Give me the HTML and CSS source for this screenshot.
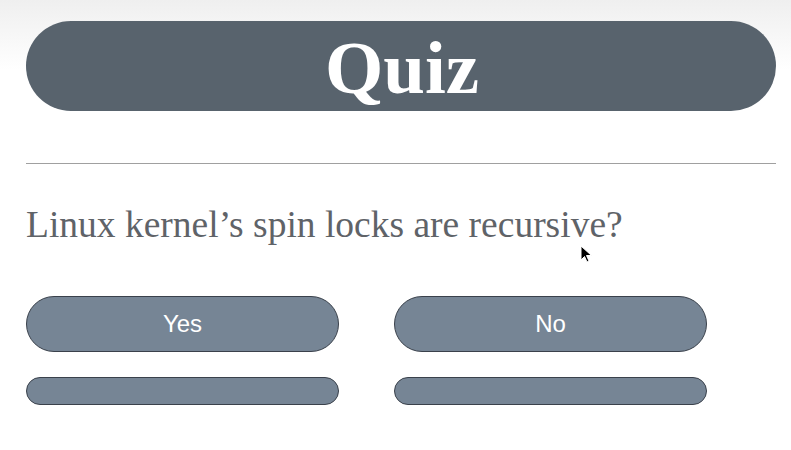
FILE: index.html
```html
<!DOCTYPE html>
<html lang="en">
<head>
<meta charset="utf-8">
<title>Quiz</title>
<link rel="stylesheet" href="styles.css">
</head>
<body>
<main class="page">
  <header class="banner"><h1 class="title">Quiz</h1></header>
  <hr class="rule">
  <p class="question">Linux kernel’s spin locks are recursive?</p>
  <div class="answers">
    <button class="answer">Yes</button>
    <button class="answer">No</button>
    <div class="bar"></div>
    <div class="bar"></div>
  </div>
</main>
<svg class="cursor" width="13" height="19" viewBox="0 0 13 19"><path d="M1 1 L1 15 L4.5 11.5 L7 17 L9 16 L6.5 10.5 L11.5 10.5 Z" fill="#000" stroke="#fff" stroke-width="1"/></svg>
</body>
</html>
```
FILE: styles.css
```css
html, body { margin: 0; padding: 0; }
body {
  background: linear-gradient(#efefef 0, #ffffff 70px) no-repeat, #fff;
  min-height: 450px;
  position: relative;
  overflow: hidden;
}
.page {
  padding: 21px 15px 0 26px;
  width: 750px;
}
.banner {
  height: 90px;
  background: #58636d;
  border-radius: 45px;
  display: flex;
  align-items: center;
  justify-content: center;
}
.title {
  margin: 0;
  font-family: "Liberation Serif", serif;
  font-weight: bold;
  font-size: 75px;
  line-height: 1;
  color: #fff;
  position: relative;
  top: 1px;
  left: 1px;
}
.rule {
  margin: 52px 0 0;
  border: 0;
  border-top: 1px solid #a0a0a0;
  height: 0;
}
.question {
  margin: 0;
  padding-top: 40px;
  font-family: "Liberation Serif", serif;
  font-size: 37.5px;
  line-height: 42px;
  color: #5f6368;
}
.answers {
  display: grid;
  grid-template-columns: 313px 313px;
  column-gap: 55px;
  row-gap: 25px;
  margin-top: 50px;
}
.answer {
  height: 56px;
  border-radius: 28px;
  background: #768595;
  border: 1px solid #3a414b;
  color: #fff;
  font-family: "Liberation Sans", Arial, sans-serif;
  font-size: 24px;
  padding: 0;
  cursor: pointer;
}
.bar {
  height: 28px;
  border-radius: 14px;
  background: #768595;
  border: 1px solid #3a414b;
  box-sizing: border-box;
}
.cursor {
  position: absolute;
  left: 580px;
  top: 245px;
}
```
